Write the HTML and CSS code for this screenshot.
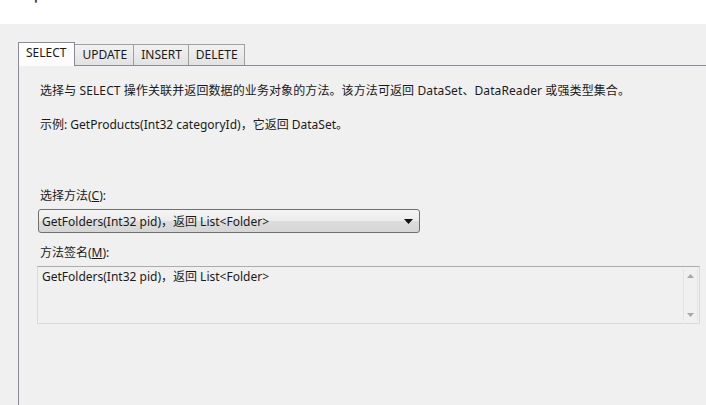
FILE: index.html
```html
<!DOCTYPE html>
<html lang="zh-CN">
<head>
<meta charset="utf-8">
<title>配置数据源</title>
<link rel="stylesheet" href="styles.css">
</head>
<body>
<div class="topbar"><span class="mark">'</span></div>
<div class="tabs">
  <div class="tab active">SELECT</div>
  <div class="tab">UPDATE</div>
  <div class="tab">INSERT</div>
  <div class="tab">DELETE</div>
</div>
<div class="panel">
  <p class="line first">选择与 SELECT 操作关联并返回数据的业务对象的方法。该方法可返回 DataSet、DataReader 或强类型集合。</p>
  <p class="line second">示例: GetProducts(Int32 categoryId)，它返回 DataSet。</p>
  <div class="label l1">选择方法(<u>C</u>):</div>
  <div class="select">
    <span class="sel-text">GetFolders(Int32 pid)，返回 List&lt;Folder&gt;</span>
    <svg class="arrow" width="9" height="5" viewBox="0 0 9 5"><path d="M0 0H9L4.5 5Z" fill="#111"/></svg>
  </div>
  <div class="label l2">方法签名(<u>M</u>):</div>
  <div class="textarea">
    <span class="ta-text">GetFolders(Int32 pid)，返回 List&lt;Folder&gt;</span>
    <div class="scroll">
      <svg width="7" height="4" viewBox="0 0 7 4"><path d="M0 4H7L3.5 0Z" fill="#a8a8a8"/></svg>
      <svg width="7" height="4" viewBox="0 0 7 4"><path d="M0 0H7L3.5 4Z" fill="#a8a8a8"/></svg>
    </div>
  </div>
</div>
</body>
</html>
```
FILE: styles.css
```css
html, body {
  margin: 0;
  padding: 0;
  background: #f0f0f0;
  font-family: "Noto Sans", "Noto Sans CJK SC", sans-serif;
  font-size: 12px;
  color: #1a1a1a;
  height: 405px;
  overflow: hidden;
}
.topbar {
  height: 24px;
  background: #ffffff;
  position: relative;
}
.mark {
  position: absolute;
  left: 34px;
  top: -6px;
  font-weight: bold;
  font-size: 14px;
  color: #333;
}
.tabs {
  display: flex;
  align-items: flex-end;
  margin: 17px 0 0 18px;
  height: 24px;
}
.tab {
  height: 20px;
  line-height: 20px;
  padding: 0 6px 0 7px;
  border: 1px solid #a0a0a0;
  border-bottom: none;
  border-left: none;
  background: linear-gradient(#f2f2f2, #e2e2e2);
  color: #1a1a1a;
}
.tab.active {
  height: 23px;
  line-height: 20px;
  padding: 0 8px 0 7px;
  border-left: 1px solid #898c95;
  border-color: #898c95;
  background: #fcfcfc;
  margin-bottom: -1px;
  position: relative;
  z-index: 1;
}
.panel {
  margin-left: 18px;
  border-left: 1px solid #898c95;
  border-top: 1px solid #898c95;
  height: 340px;
  padding: 17px 0 0 21px;
  box-sizing: border-box;
}
.line {
  margin: 0;
  line-height: 16px;
}
.first { letter-spacing: 0.1px; }
.second { margin-top: 18px; }
.label { line-height: 16px; }
.l1 { margin-top: 55px; }
.l2 { margin-top: 12px; }
.select {
  margin: 5px 0 0 -2px;
  width: 382px;
  height: 24px;
  box-sizing: border-box;
  border: 1px solid #707070;
  border-radius: 3px;
  background: linear-gradient(#f4f4f4 0%, #ececec 50%, #dcdcdc 51%, #d6d6d6 100%);
  display: flex;
  align-items: center;
  justify-content: space-between;
  padding: 0 6px 0 3px;
}
.textarea {
  margin: 5px 0 0 -3px;
  width: 663px;
  height: 58px;
  box-sizing: border-box;
  border: 1px solid #dadada;
  border-top-color: #acacac;
  background: #f0f0f0;
  display: flex;
  justify-content: space-between;
  padding: 2px 0 0 4px;
}
.ta-text { line-height: 16px; }
.scroll {
  width: 15px;
  height: 52px;
  margin-right: 1px;
  border-left: 1px solid #e4e4e4;
  border-right: 1px solid #e4e4e4;
  display: flex;
  flex-direction: column;
  justify-content: space-between;
  align-items: center;
  padding: 5px 0 4px;
  box-sizing: border-box;
}
```
